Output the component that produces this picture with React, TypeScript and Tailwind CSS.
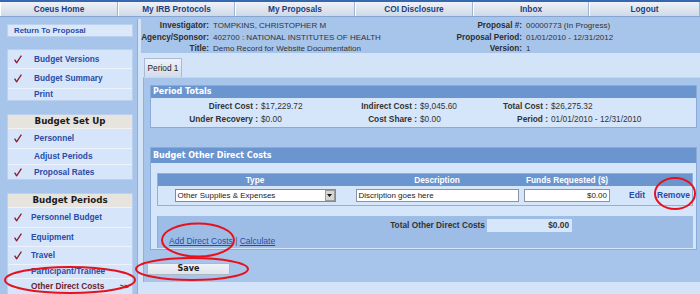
import React from "react";

const tabs: [string, string][] = [
  ["Coeus Home", "w-[118px]"],
  ["My IRB Protocols", "w-[117px]"],
  ["My Proposals", "w-[120px]"],
  ["COI Disclosure", "w-[118px]"],
  ["Inbox", "w-[116px]"],
  ["Logout", "flex-1"],
];

function Check() {
  return (
    <svg width="8" height="9" viewBox="0 0 8 9" className="shrink-0">
      <path d="M0.6 4.6 L2.6 7.8 L7.4 0.6" fill="none" stroke="#8b1d2d" strokeWidth="1.3" strokeLinejoin="round" />
    </svg>
  );
}

type Row = { label: string; check?: boolean; h: string; current?: boolean };

function Group({ title, rows, indent }: { title?: string; rows: Row[]; indent: string }) {
  return (
    <div className="w-[126px] border border-[#bcd0ed] bg-[#d6e5fa]">
      {title && (
        <div className="h-[14px] flex items-center justify-center bg-[#e7e4df] border-b border-[#f3f1ee] font-['DejaVu_Sans',Verdana,sans-serif] font-bold text-[8.7px] text-[#1a1a1a]">
          {title}
        </div>
      )}
      {rows.map((r, i) => (
        <div
          key={r.label}
          className={`${r.h} flex items-center pl-[6px] ${i > 0 ? "border-t border-[#edf3fc]" : ""}`}
        >
          <div className="w-[8px] flex items-center">{r.check && <Check />}</div>
          <div
            className={`${indent} flex-1 text-[8.3px] font-bold ${r.current ? "text-[#6d2232]" : "text-[#2a4ba6]"}`}
          >
            {r.label}
          </div>
          {r.current && <div className="pr-[3px] text-[8px] font-bold text-[#333]">&gt;&gt;</div>}
        </div>
      ))}
    </div>
  );
}

function Sidebar() {
  return (
    <aside className="w-[138px] h-full shrink-0 bg-[#a7c4ea] border-r border-[#8fafdb] pt-[5px] pl-[7px]">
      <div className="w-[126px] h-[13px] bg-[#dbe8fa] border border-[#bcd1ee] flex items-center pl-[6px] text-[7.8px] font-bold text-[#2a4ba6]">
        Return To Proposal
      </div>
      <div className="mt-[12px]">
        <Group
          indent="pl-[12px]"
          rows={[
            { label: "Budget Versions", check: true, h: "h-[18px]" },
            { label: "Budget Summary", check: true, h: "h-[20px]" },
            { label: "Print", h: "h-[12px]" },
          ]}
        />
      </div>
      <div className="mt-[13px]">
        <Group
          title="Budget Set Up"
          indent="pl-[12px]"
          rows={[
            { label: "Personnel", check: true, h: "h-[19px]" },
            { label: "Adjust Periods", h: "h-[16px]" },
            { label: "Proposal Rates", check: true, h: "h-[15px]" },
          ]}
        />
      </div>
      <div className="mt-[13px]">
        <Group
          title="Budget Periods"
          indent="pl-[9px]"
          rows={[
            { label: "Personnel Budget", check: true, h: "h-[19px]" },
            { label: "Equipment", check: true, h: "h-[19px]" },
            { label: "Travel", check: true, h: "h-[18px]" },
            { label: "Participant/Trainee", h: "h-[14px]" },
            { label: "Other Direct Costs", h: "h-[16px]", current: true },
          ]}
        />
      </div>
    </aside>
  );
}

function InfoHeader() {
  const L = "text-right font-bold text-[8.2px] text-[#2e2e2e]";
  const V = "pl-[4px] text-[8px] text-[#333] whitespace-nowrap";
  return (
    <div className="h-[34px] bg-[#a7c4ea] grid grid-cols-[68px_231px_82px_1fr] content-start pt-[1px] leading-[11.5px]">
      <div className={L}>Investigator:</div>
      <div className={V}>TOMPKINS, CHRISTOPHER M</div>
      <div className={L}>Proposal #:</div>
      <div className={V}>00000773 (In Progress)</div>
      <div className={L}>Agency/Sponsor:</div>
      <div className={V}>402700 : NATIONAL INSTITUTES OF HEALTH</div>
      <div className={L}>Proposal Period:</div>
      <div className={V}>01/01/2010 - 12/31/2012</div>
      <div className={L}>Title:</div>
      <div className={V}>Demo Record for Website Documentation</div>
      <div className={L}>Version:</div>
      <div className={V}>1</div>
    </div>
  );
}

function PeriodTotals() {
  const L = "text-right font-bold text-[8.3px] text-[#333] whitespace-nowrap";
  const V = "pl-[3px] text-[8.3px] text-[#333] whitespace-nowrap";
  return (
    <div className="h-[43px] border border-[#89abd9] bg-[#d5e5fa]">
      <div className="h-[12px] bg-[#6a95cf] flex items-center pl-[2px] font-['DejaVu_Sans',Verdana,sans-serif] font-bold text-[8px] text-white">
        Period Totals
      </div>
      <div className="pt-[2px] grid grid-cols-[107px_87px_72px_73px_58px_1fr] auto-rows-[13px] items-center">
        <div className={L}>Direct Cost :</div>
        <div className={V}>$17,229.72</div>
        <div className={L}>Indirect Cost :</div>
        <div className={V}>$9,045.60</div>
        <div className={L}>Total Cost :</div>
        <div className={V}>$26,275.32</div>
        <div className={L}>Under Recovery :</div>
        <div className={V}>$0.00</div>
        <div className={L}>Cost Share :</div>
        <div className={V}>$0.00</div>
        <div className={L}>Period :</div>
        <div className={V}>01/01/2010 - 12/31/2010</div>
      </div>
    </div>
  );
}

function OtherDirectCosts() {
  const H = "flex items-center justify-center font-bold text-[8.3px] text-white";
  return (
    <div className="h-[103px] border border-[#89abd9] bg-[#d5e5fa]">
      <div className="h-[15px] bg-[#6a95cf] flex items-center pl-[2px] font-['DejaVu_Sans',Verdana,sans-serif] font-bold text-[8px] text-white">
        Budget Other Direct Costs
      </div>
      <div className="pt-[10px] pl-[6px] pr-[3px]">
        <div className="border border-[#8fb0dc]">
          <div className="h-[12px] bg-[#6a95cf] grid grid-cols-[194px_170px_90px_40px_1fr]">
            <div className={H}>Type</div>
            <div className={H}>Description</div>
            <div className={H}>Funds Requested ($)</div>
            <div />
            <div />
          </div>
          <div className="h-[19px] bg-[#d5e5fa] grid grid-cols-[194px_170px_90px_40px_1fr] items-center">
            <div className="flex justify-center">
              <div className="w-[161px] h-[13px] bg-white border border-[#7f8a9c] flex items-center">
                <div className="flex-1 pl-[2px] text-[8px] text-[#222] whitespace-nowrap">Other Supplies &amp; Expenses</div>
                <div className="w-[10px] h-[11px] bg-[#d8d6d0] border border-[#9b9b9b] flex items-center justify-center">
                  <svg width="5" height="3" viewBox="0 0 5 3">
                    <path d="M0 0 H5 L2.5 3 Z" fill="#111" />
                  </svg>
                </div>
              </div>
            </div>
            <div className="flex justify-center">
              <div className="w-[163px] h-[13px] bg-white border border-[#8a93a3] flex items-center pl-[2px] text-[8px] text-[#222] whitespace-nowrap">
                Discription goes here
              </div>
            </div>
            <div className="flex justify-center">
              <div className="w-[86px] h-[13px] bg-white border border-[#8a93a3] flex items-center justify-end pr-[2px] text-[8px] text-[#222]">
                $0.00
              </div>
            </div>
            <div className="pl-[17px] font-bold text-[8.5px] text-[#2a4ba6]">Edit</div>
            <div className="pl-[5px] font-bold text-[8.5px] text-[#2a4ba6]">Remove</div>
          </div>
        </div>
        <div className="mt-[10px] h-[32px] bg-[#9ebde6] border-l border-[#8aaedb]">
          <div className="pt-[3px] grid grid-cols-[327px_87px] items-center">
            <div className="text-right font-bold text-[8.3px] text-[#333] whitespace-nowrap">Total Other Direct Costs</div>
            <div className="ml-[2px] h-[13px] bg-[#d6e6fb] flex items-center justify-end pr-[3px] font-bold text-[8.3px] text-[#333]">
              $0.00
            </div>
          </div>
          <div className="pl-[11px] mt-[3px] text-[8.5px] text-[#2a4ba6] whitespace-nowrap">
            <span className="underline">Add Direct Costs</span>
            <span className="text-[#555]"> | </span>
            <span className="underline">Calculate</span>
          </div>
        </div>
      </div>
    </div>
  );
}

function Main() {
  return (
    <main className="flex-1 ml-[3px] flex flex-col">
      <InfoHeader />
      <div className="mt-[5px] ml-[3px] w-[38px] h-[19px] bg-gradient-to-b from-[#eef2f8] to-[#d3dceb] border border-b-0 border-[#a6bbd8] flex items-center justify-center text-[8.3px] text-[#222]">
        Period 1
      </div>
      <div className="ml-[2px] h-[205px] bg-[#a7c4ea] border-l border-t border-l-[#8fb0da] border-t-[#c4d7f0] pt-[7px] pl-[6px] pr-[3px]">
        <PeriodTotals />
        <div className="mt-[19px]">
          <OtherDirectCosts />
        </div>
        <div className="mt-[13px] -ml-[3px] w-[83px] h-[12px] bg-gradient-to-b from-[#f0f2f7] to-[#dfe3ec] border border-[#aeb8c9] flex items-center justify-center font-['DejaVu_Sans',Verdana,sans-serif] font-bold text-[8px] text-[#222]">
          Save
        </div>
      </div>
    </main>
  );
}

function Annotations() {
  return (
    <svg className="absolute inset-0 pointer-events-none" width="700" height="294" viewBox="0 0 700 294">
      <g fill="none" stroke="#e5121e" strokeWidth="2">
        <ellipse cx="70" cy="280" rx="65" ry="13" />
        <ellipse cx="192" cy="269" rx="56" ry="11" />
        <ellipse cx="198" cy="240" rx="36" ry="16.5" />
        <ellipse cx="675" cy="193.5" rx="20" ry="15.5" />
      </g>
    </svg>
  );
}

export default function App() {
  return (
    <div className="relative w-[700px] h-[294px] overflow-hidden bg-[#d3e3f8] font-['Liberation_Sans',Arial,sans-serif] text-[#333]">
      <div className="flex h-[17px] border-t-2 border-b border-t-[#3767b0] border-b-[#86a5d1] bg-[#a7c4ea]">
        {tabs.map(([t, w]) => (
          <div
            key={t}
            className={`${w} flex items-center justify-center bg-gradient-to-b from-[#eef2f8] to-[#cfd9e8] border-r border-r-[#9fb4d2] border-l border-l-white text-[8.3px] font-bold text-[#1e3d7d] whitespace-nowrap`}
          >
            {t}
          </div>
        ))}
      </div>
      <div className="h-[2px] bg-[#a7c4ea]" />
      <div className="flex h-[275px]">
        <Sidebar />
        <Main />
      </div>
      <Annotations />
    </div>
  );
}
